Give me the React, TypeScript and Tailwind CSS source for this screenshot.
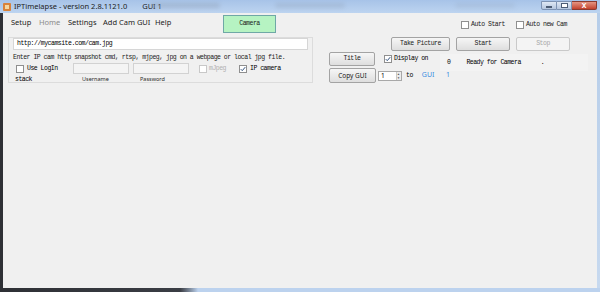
const mono = { fontFamily: '"Liberation Mono", "DejaVu Sans Mono", monospace' }

function Box({ checked = false, disabled = false }: { checked?: boolean; disabled?: boolean }) {
  return (
    <span
      className={`flex h-[8px] w-[8px] shrink-0 items-center justify-center border bg-white ${
        disabled ? 'border-[#c8c8c8] bg-[#f4f4f4]' : 'border-[#8f8f8f]'
      }`}
    >
      {checked && (
        <svg viewBox="0 0 8 8" className="h-[6px] w-[6px]">
          <path d="M1 4.2 L3 6.2 L7 1.5" fill="none" stroke="#2b4c7a" strokeWidth="1.3" />
        </svg>
      )}
    </span>
  )
}

function Btn({ label, w, h = 14, disabled = false, sans = false }: { label: string; w: number; h?: number; disabled?: boolean; sans?: boolean }) {
  return (
    <div
      style={{ width: w, height: h }}
      className={`flex shrink-0 items-center justify-center rounded-[2px] border ${
        disabled
          ? 'border-[#c9c9c9] bg-[#f4f4f4] text-[#a8a8a8]'
          : 'border-[#a3a3a3] bg-gradient-to-b from-[#f6f6f6] to-[#dedede] text-[#1a1a1a]'
      }`}
    >
      <span
        className={sans ? "font-['Noto_Sans'] text-[6.5px]" : 'text-[6.5px] tracking-[-0.5px]'}
        style={sans ? undefined : mono}
      >
        {label}
      </span>
    </div>
  )
}

export default function App() {
  return (
    <div className="flex h-[292px] w-[600px] flex-col overflow-hidden bg-[#f0f0f0] font-['Noto_Sans']">
      {/* title bar */}
      <div className="relative flex h-[13px] shrink-0 items-center bg-gradient-to-b from-[#a7c3e8] to-[#bdd4f0] pl-[3px]">
        <div className="absolute left-[150px] top-[3px] h-[5px] w-[70px] rounded bg-[#8d9cb0] opacity-40 blur-[2px]" />
        <div className="absolute left-[275px] top-[3px] h-[5px] w-[70px] rounded bg-[#8d9cb0] opacity-30 blur-[2px]" />
        <div className="absolute left-[455px] top-[3px] h-[5px] w-[60px] rounded bg-[#8d9cb0] opacity-20 blur-[2px]" />
        <span className="flex h-[8px] w-[8px] items-center justify-center rounded-[1px] bg-[#d9823a]">
          <span className="h-[4px] w-[4px] bg-[#f5d7a0]" />
        </span>
        <span className="ml-[3px] text-[7.5px] leading-none text-[#1b1b1b]">IPTimelapse - version 2.8.1121.0</span>
        <span className="ml-[15px] text-[7.5px] leading-none text-[#1b1b1b]">GUI 1</span>
        <div className="ml-auto flex h-full items-start pt-[1px] pr-[3px]">
          <div className="flex h-[9px] w-[16px] items-end justify-center rounded-bl-[2px] border border-[#7e93b3] bg-gradient-to-b from-[#dfe8f4] to-[#b5c6de] pb-[1px]">
            <span className="h-[2px] w-[6px] border border-[#4d5d75] bg-white" />
          </div>
          <div className="flex h-[9px] w-[15px] items-center justify-center border border-l-0 border-[#7e93b3] bg-gradient-to-b from-[#dfe8f4] to-[#b5c6de]">
            <span className="h-[5px] w-[7px] border border-[#4d5d75] bg-white" />
          </div>
          <div className="flex h-[9px] w-[25px] items-center justify-center rounded-br-[2px] border border-l-0 border-[#8a3b30] bg-gradient-to-b from-[#e49482] to-[#c2402c] text-[7px] font-bold leading-none text-white">
            X
          </div>
        </div>
      </div>

      <div className="flex min-h-0 flex-1">
        <div className="w-[3px] bg-[#2e3035]" />
        <div className="flex flex-1 flex-col">
          {/* menu row */}
          <div className="flex h-[24px] items-start text-[7.5px] text-[#1b1b1b]">
            <div className="mt-[4px] flex pl-[8px]">
              <span className="w-[28px]">Setup</span>
              <span className="w-[29px] text-[#8a8a8a]">Home</span>
              <span className="w-[35px]">Settings</span>
              <span className="w-[52px]">Add Cam GUI</span>
              <span className="w-[68px]">Help</span>
            </div>
            <div className="mt-[2px] flex h-[18px] w-[53px] items-center justify-center border border-[#6fa8a6] bg-[#b6f3c2]">
              <span className="text-[6.5px] tracking-[-0.5px]" style={mono}>Camera</span>
            </div>
            <div className="ml-[185px] mt-[7px] flex items-center gap-[2px]">
              <Box />
              <span className="text-[6.5px] tracking-[-0.5px]" style={mono}>Auto Start</span>
            </div>
            <div className="ml-[11px] mt-[7px] flex items-center gap-[2px]">
              <Box />
              <span className="text-[6.5px] tracking-[-0.5px]" style={mono}>Auto new Cam</span>
            </div>
          </div>

          {/* main row */}
          <div className="flex">
            {/* group box */}
            <div className="ml-[5px] h-[46px] w-[305px] border border-[#dcdcdc] px-[4px]">
              <div className="flex h-[12px] items-center border border-[#d6d6d6] bg-white pl-[3px]">
                <span className="text-[6.5px] tracking-[-0.5px]" style={mono}>http://mycamsite.com/cam.jpg</span>
              </div>
              <div className="mt-[3px] text-[6.5px] leading-[10px] tracking-[-0.5px] text-[#1b1b1b]" style={mono}>
                Enter IP cam http snapshot cmd, rtsp, mjpeg, jpg on a webpage or local jpg file.
              </div>
              <div className="flex h-[11px] items-center">
                <div className="ml-[3px] flex w-[57px] items-center gap-[3px]">
                  <Box />
                  <span className="text-[6.5px] tracking-[-0.5px]" style={mono}>Use LogIn</span>
                </div>
                <div className="h-[11px] w-[56px] border border-[#d2d2d2] bg-[#f4f4f4]" />
                <div className="ml-[4px] h-[11px] w-[56px] border border-[#d2d2d2] bg-[#f4f4f4]" />
                <div className="ml-[10px] flex w-[40px] items-center gap-[2px]">
                  <Box disabled />
                  <span className="text-[6.5px] tracking-[-0.5px] text-[#b0b0b0]" style={mono}>mJpeg</span>
                </div>
                <div className="flex items-center gap-[3px]">
                  <Box checked />
                  <span className="text-[6.5px] tracking-[-0.5px]" style={mono}>IP camera</span>
                </div>
              </div>
              <div className="mt-[1px] flex h-[9px] items-center">
                <span className="ml-[2px] w-[67px] text-[6.5px] tracking-[-0.5px]" style={mono}>stack</span>
                <span className="w-[58px] text-[5.5px] text-[#2a2a2a]">Username</span>
                <span className="text-[5.5px] text-[#2a2a2a]">Password</span>
              </div>
            </div>

            {/* right controls */}
            <div className="ml-[16px] flex flex-col">
              <div className="ml-[62px] flex gap-[6px]">
                <Btn label="Take Picture" w={59} />
                <Btn label="Start" w={54} />
                <Btn label="Stop" w={54} disabled />
              </div>
              <div className="flex">
                <div className="flex w-[111px] flex-col">
                  <div className="mt-[1px] flex items-center">
                    <Btn label="Title" w={46} />
                    <div className="ml-[9px] flex items-center gap-[2px]">
                      <Box checked />
                      <span className="text-[6.5px] tracking-[-0.5px]" style={mono}>Display on</span>
                    </div>
                  </div>
                  <div className="mt-[2px] flex items-center">
                    <Btn label="Copy GUI" w={47} h={15} sans />
                    <div className="ml-[2px] flex h-[10px] w-[24px] border border-[#a8a8a8] bg-white">
                      <span className="flex-1 pl-[2px] text-[6.5px] leading-[8px]">1</span>
                      <div className="flex w-[5px] flex-col border-l border-[#c8c8c8] bg-[#ececec] text-[3px] leading-[4px] text-[#555]">
                        <span>▲</span>
                        <span>▼</span>
                      </div>
                    </div>
                    <span className="ml-[4px] text-[6.5px] tracking-[-0.5px]" style={mono}>to</span>
                    <span className="ml-[9px] text-[7px] text-[#3a8de0]">GUI</span>
                  </div>
                </div>
                <div className="flex flex-col">
                  <div className="mt-[3px] flex h-[17px] w-[148px] items-center bg-[#f3f3f3] text-[6.5px] tracking-[-0.5px]" style={mono}>
                    <span className="ml-[7px]">0</span>
                    <span className="ml-[16px]">Ready for Camera</span>
                    <span className="ml-[20px]">.</span>
                  </div>
                  <span className="ml-[6px] text-[7px] leading-[7px] text-[#3a8de0]">1</span>
                </div>
              </div>
            </div>
          </div>
        </div>
        <div className="w-[3px] bg-gradient-to-b from-[#b6cde9] to-[#c7d9ef]" />
      </div>

      <div className="h-[4px] shrink-0 bg-gradient-to-r from-[#2e3035] via-[#3a3d44] via-30% to-[#bcd2ee] to-[33%]" />
    </div>
  )
}
